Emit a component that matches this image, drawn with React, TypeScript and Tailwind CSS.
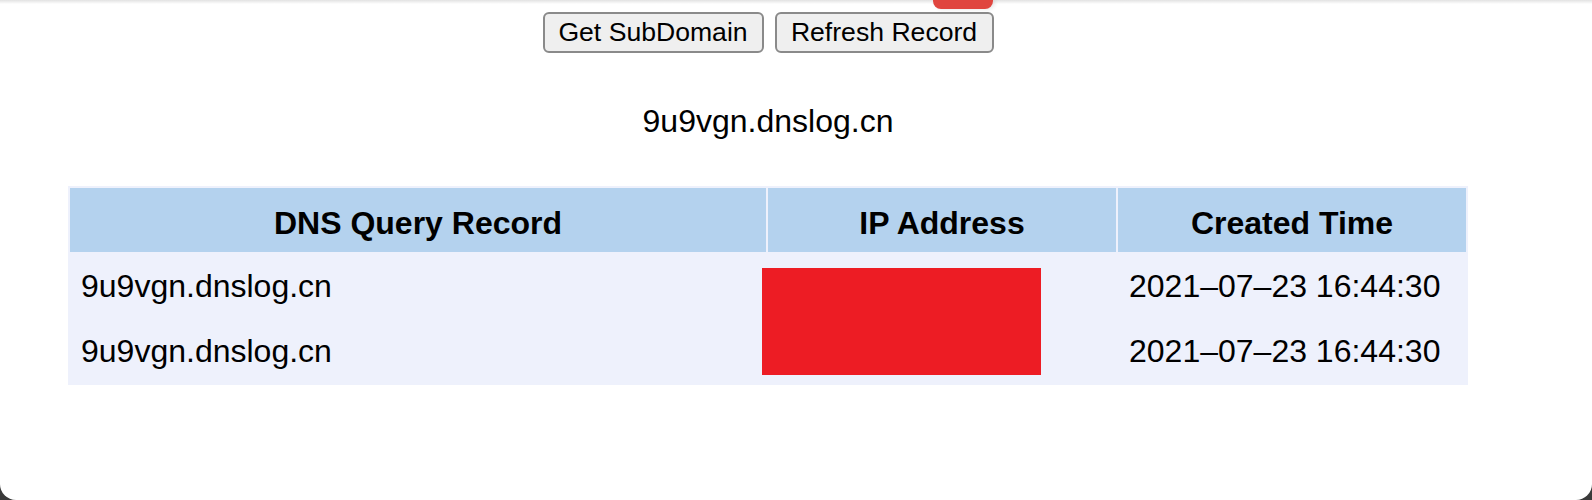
import React from 'react';

const records = [
  { domain: '9u9vgn.dnslog.cn', ip: '', time: '2021-07-23 16:44:30' },
  { domain: '9u9vgn.dnslog.cn', ip: '', time: '2021-07-23 16:44:30' },
];

export default function App() {
  return (
    <div className="min-h-[500px] bg-[#3a3a3a] font-['Liberation_Sans',Arial,sans-serif] text-black">
      <div className="relative h-[500px] overflow-hidden rounded-b-[16px] bg-white">
        {/* window top shade */}
        <div className="absolute inset-x-0 top-0 h-[4px] bg-gradient-to-b from-[#e2e2e2] to-white" />
        {/* red marker peeking from the top */}
        <div className="absolute left-[933px] top-0 h-[9px] w-[60px] rounded-b-[8px] bg-[#e0453f] shadow-[2px_0_4px_rgba(0,0,0,0.12)]" />

        <div className="flex w-[1536px] flex-col items-center pt-[12px]">
          <div className="flex gap-[11px]">
            <button className="h-[41px] w-[221px] rounded-[6px] border-2 border-[#8a8a8a] bg-[#efefef] text-[26.6px] leading-none">
              Get SubDomain
            </button>
            <button className="h-[41px] w-[219px] rounded-[6px] border-2 border-[#8a8a8a] bg-[#efefef] text-[26.6px] leading-none">
              Refresh Record
            </button>
          </div>

          <p className="mt-[50px] text-[32px] leading-[37px]">9u9vgn.dnslog.cn</p>

          <div className="relative mt-[46px] w-[1400px]">
            <table className="w-full table-fixed border-separate border-spacing-[2px] bg-[#eef1fc] text-[32px]">
              <thead>
                <tr>
                  <th className="h-[64px] w-[696px] bg-[#b4d2ee] pt-[5px] text-center font-bold">DNS Query Record</th>
                  <th className="h-[64px] w-[348px] bg-[#b4d2ee] pt-[5px] text-center font-bold">IP Address</th>
                  <th className="h-[64px] w-[348px] bg-[#b4d2ee] pt-[5px] text-center font-bold">Created Time</th>
                </tr>
              </thead>
              <tbody>
                {records.map((r, i) => (
                  <tr key={i}>
                    <td className={(i === 0 ? 'h-[63px]' : 'h-[64px]') + ' whitespace-nowrap px-[11px] text-left'}>{r.domain}</td>
                    <td className="px-[11px]">{r.ip}</td>
                    <td className="whitespace-nowrap px-[11px] text-left">{r.time.replace(/-/g, '\u2013')}</td>
                  </tr>
                ))}
              </tbody>
            </table>
            {/* redacted IP addresses */}
            <div className="absolute left-[694px] top-[82px] h-[107px] w-[279px] bg-[#ed1c24]" />
          </div>
        </div>
      </div>
    </div>
  );
}
